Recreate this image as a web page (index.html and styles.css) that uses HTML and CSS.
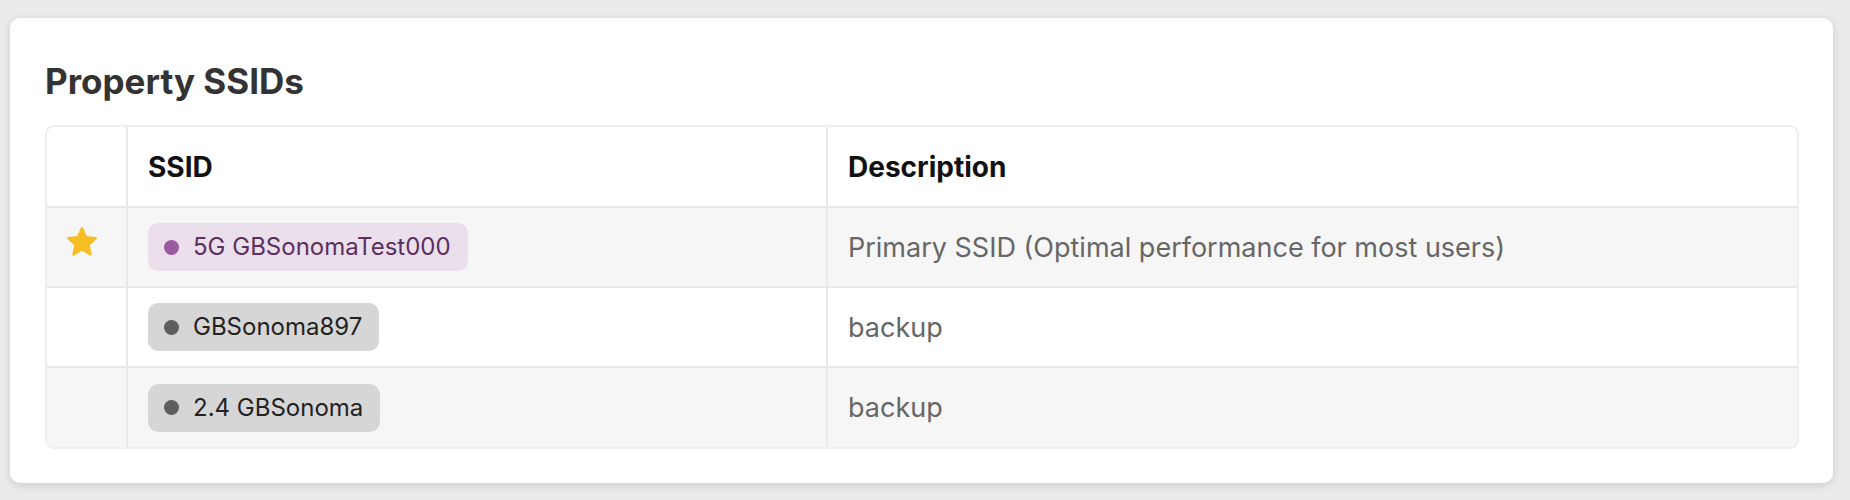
FILE: index.html
```html
<!DOCTYPE html>
<html lang="en">
<head>
<meta charset="utf-8">
<title>Property SSIDs</title>
<link rel="stylesheet" href="styles.css">
</head>
<body>
<div class="page">
  <section class="card">
    <h2 class="card-title">Property SSIDs</h2>
    <div class="table-wrap">
      <table class="ssid-table">
        <colgroup>
          <col class="col-star">
          <col class="col-ssid">
          <col class="col-desc">
        </colgroup>
        <thead>
          <tr>
            <th></th>
            <th>SSID</th>
            <th>Description</th>
          </tr>
        </thead>
        <tbody>
          <tr class="alt">
            <td class="star-cell">
              <svg class="star" viewBox="0 0 30 29" aria-hidden="true">
                <path d="M15 1.2L19 10.2L28.79 11.22L21.47 17.8L23.52 27.43L15 22.5L6.48 27.43L8.53 17.8L1.21 11.22L11 10.2Z" fill="#f6bd24" stroke="#f6bd24" stroke-width="2.4" stroke-linejoin="round"/>
              </svg>
            </td>
            <td><span class="pill pill-primary"><span class="dot"></span>5G GBSonomaTest000</span></td>
            <td class="desc">Primary SSID (Optimal performance for most users)</td>
          </tr>
          <tr>
            <td class="star-cell"></td>
            <td><span class="pill pill-backup"><span class="dot"></span>GBSonoma897</span></td>
            <td class="desc">backup</td>
          </tr>
          <tr class="alt">
            <td class="star-cell"></td>
            <td><span class="pill pill-backup"><span class="dot"></span>2.4 GBSonoma</span></td>
            <td class="desc">backup</td>
          </tr>
        </tbody>
      </table>
    </div>
  </section>
</div>
</body>
</html>
```

FILE: styles.css
```css
* { box-sizing: border-box; }

html, body {
  margin: 0;
  padding: 0;
  background: #ebebeb;
  font-family: Inter, "Noto Sans", "Liberation Sans", sans-serif;
}

.page {
  padding: 18px 17px 17px 10px;
}

.card {
  background: #ffffff;
  border-radius: 10px;
  box-shadow: 0 2px 8px rgba(0, 0, 0, 0.14);
  padding: 42px 34px 34px 35px;
}

.card-title {
  margin: 0 0 23px;
  font-size: 35px;
  line-height: 42px;
  font-weight: 700;
  color: #333333;
}

.table-wrap {
  border: 2px solid #eeeeee;
  border-radius: 9px;
  overflow: hidden;
}

.ssid-table {
  width: 100%;
  border-collapse: collapse;
  table-layout: fixed;
}

.col-star { width: 80px; }
.col-ssid { width: 700px; }

.ssid-table th,
.ssid-table td {
  border-left: 2px solid #e8e7ec;
  border-top: 2px solid #e8e7ec;
  padding: 0 20px;
  text-align: left;
  vertical-align: middle;
}

.ssid-table th:first-child,
.ssid-table td:first-child { border-left: none; }

.ssid-table thead th {
  border-top: none;
  height: 80px;
  font-size: 28px;
  font-weight: 700;
  color: #111111;
}

.ssid-table tbody td {
  height: 80px;
}

.ssid-table tr.alt td { background: #f6f6f6; }

.ssid-table td.star-cell {
  vertical-align: top;
  padding: 19px 0 0 20px;
}

.star {
  display: block;
  width: 30px;
  height: 29px;
}

.pill {
  display: inline-flex;
  align-items: center;
  gap: 14px;
  height: 48px;
  padding: 0 17px 0 16px;
  border-radius: 10px;
  font-size: 24px;
  line-height: 1;
}

.pill .dot {
  width: 15px;
  height: 15px;
  border-radius: 50%;
  flex: none;
}

.pill-primary {
  background: #ecdfec;
  color: #5b2f5f;
}
.pill-primary .dot { background: #9a5aa1; }

.pill-backup {
  background: #d6d6d6;
  color: #222222;
}
.pill-backup .dot { background: #5e5e5e; }

.desc {
  font-size: 27px;
  color: #666666;
}
```
